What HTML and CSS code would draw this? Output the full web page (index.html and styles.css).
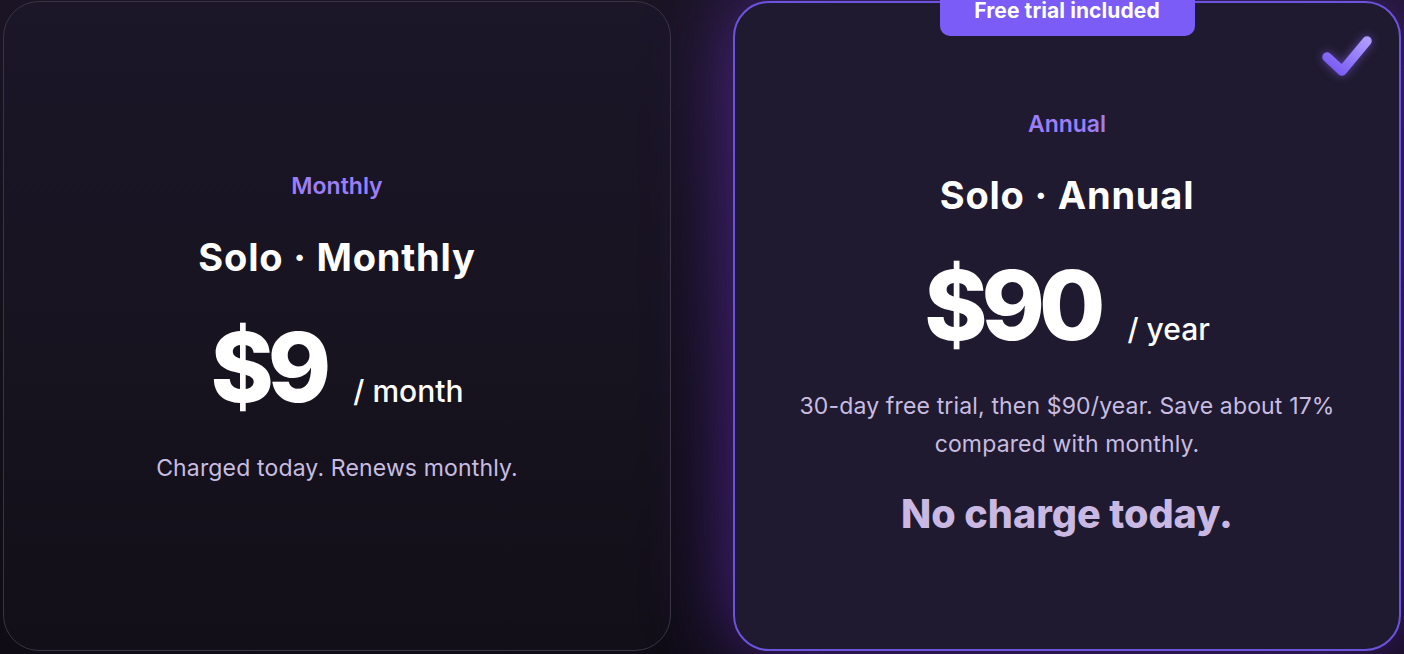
FILE: index.html
```html
<!doctype html>
<html>
<head>
<meta charset="utf-8">
<title>Plans</title>
<link rel="stylesheet" href="styles.css">
</head>
<body>
<div class="plans">
	<section class="plan">
		<div class="planLabel">Monthly</div>
		<h2 class="planTitle">Solo · Monthly</h2>
		<div class="price">
			<span class="amount">$9</span>
			<span class="period">/ month</span>
		</div>
		<p class="note">Charged today. Renews monthly.</p>
	</section>
	<section class="plan planActive">
		<div class="badge">Free trial included</div>
		<svg class="check" width="56" height="46" viewBox="0 0 56 46">
			<defs>
				<linearGradient id="checkGrad" x1="1" y1="0" x2="0" y2="1">
					<stop offset="0" stop-color="#ad9bff"/>
					<stop offset="1" stop-color="#7655f2"/>
				</linearGradient>
			</defs>
			<path d="M9 25 L24 39 L49 9" fill="none" stroke="url(#checkGrad)" stroke-width="9.5" stroke-linecap="round" stroke-linejoin="round"/>
		</svg>
		<div class="planLabel">Annual</div>
		<h2 class="planTitle">Solo · Annual</h2>
		<div class="price">
			<span class="amount">$90</span>
			<span class="period">/ year</span>
		</div>
		<p class="note noteWide">30-day free trial, then $90/year. Save about 17% compared with monthly.</p>
		<p class="today">No charge today.</p>
	</section>
</div>
</body>
</html>
```

FILE: styles.css
```css
html,
body {
	margin: 0;
	height: 100%;
	overflow: hidden;
}
body {
	background: linear-gradient(180deg, #1a1424 0%, #120f1a 60%, #0f0c15 100%);
	font-family: Inter, "Noto Sans", sans-serif;
	color: #fff;
}
.plans {
	display: grid;
	grid-template-columns: 668px 668px;
	column-gap: 62px;
	padding: 1px 3px 0;
}
.plan {
	position: relative;
	box-sizing: border-box;
	height: 650px;
	display: flex;
	flex-direction: column;
	align-items: center;
	justify-content: center;
	text-align: center;
	padding-top: 6px;
	border: 1.5px solid #3a3442;
	border-radius: 36px;
	background: linear-gradient(180deg, #1b1628 0%, #17131f 55%, #120f18 100%);
}
.planActive {
	border: 2px solid #6b54dc;
	background: #1f1a2f;
	box-shadow: 0 0 80px rgba(118, 50, 220, .6);
	padding-top: 0;
	padding-bottom: 6px;
}
.badge {
	position: absolute;
	top: -18px;
	left: 50%;
	width: 255px;
	margin-left: -127.5px;
	padding: 17px 0 16px;
	background: #7b5cf6;
	border-radius: 0 0 10px 10px;
	font-size: 21px;
	font-weight: 700;
	line-height: 18px;
	letter-spacing: .1px;
}
.check {
	position: absolute;
	top: 29px;
	right: 25px;
	filter: drop-shadow(0 0 5px rgba(140, 100, 255, .55));
}
.planLabel {
	font-size: 23px;
	font-weight: 600;
	line-height: 28px;
	color: #9c7ef6;
}
.planTitle {
	margin: 34px 0 0;
	font-size: 38px;
	font-weight: 700;
	line-height: 46px;
	letter-spacing: .8px;
}
.price {
	margin-top: 37px;
	display: flex;
	align-items: baseline;
	gap: 28px;
	line-height: 100px;
}
.amount {
	font-size: 96px;
	font-weight: 800;
	letter-spacing: -6px;
}
.period {
	font-size: 30px;
	font-weight: 500;
}
.note {
	margin: 8px 0 0;
	font-size: 23px;
	line-height: 38px;
	letter-spacing: .15px;
	color: #c8bde0;
}
.noteWide {
	max-width: 580px;
}
.today {
	margin: 29px 0 0;
	font-size: 39.5px;
	font-weight: 800;
	line-height: 44px;
	color: #c9b9e2;
}
```
